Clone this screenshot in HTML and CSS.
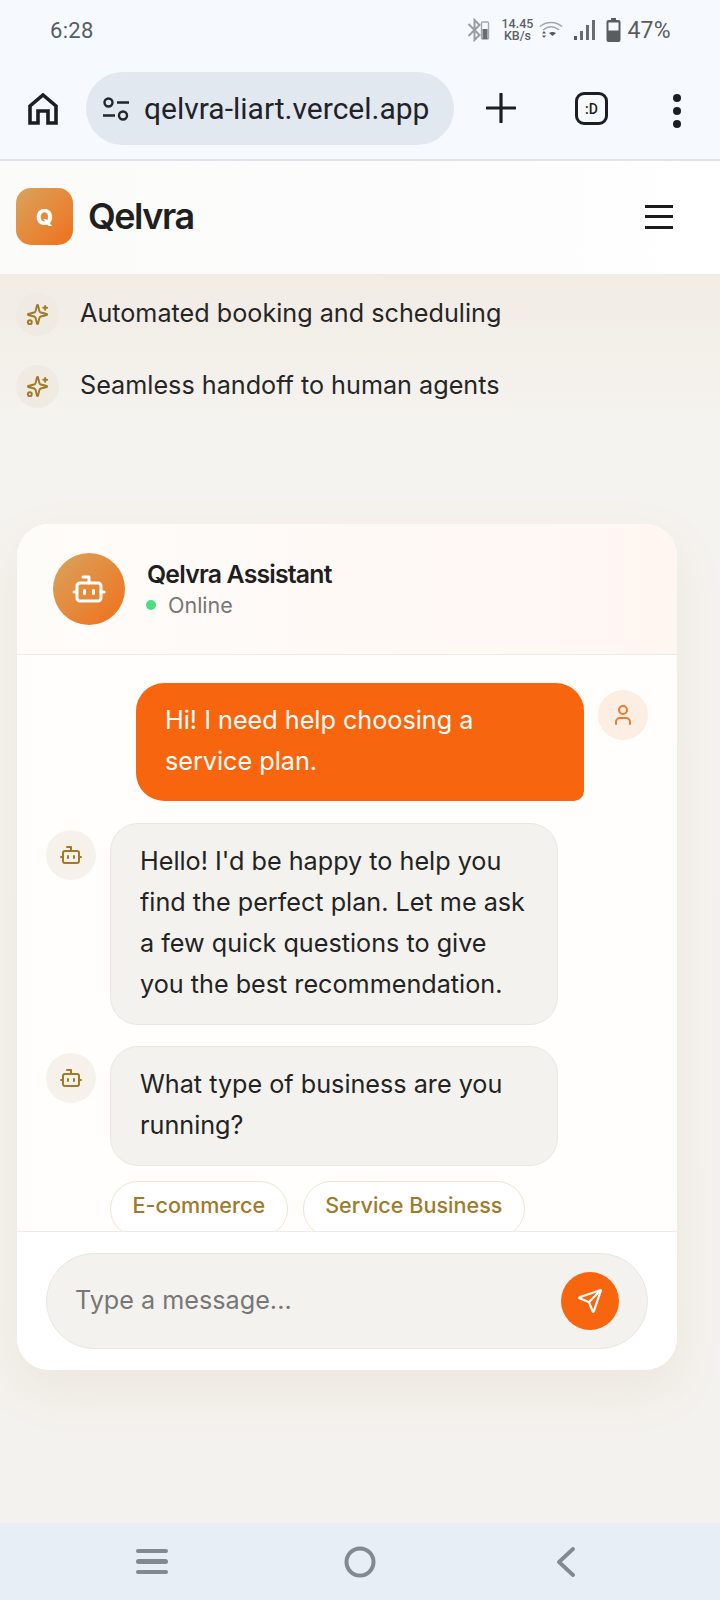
FILE: index.html
```html
<!DOCTYPE html>
<html lang="en">
<head>
<meta charset="utf-8">
<title>Qelvra</title>
<link rel="stylesheet" href="styles.css">
</head>
<body>
<svg class="defs" width="0" height="0" aria-hidden="true">
  <symbol id="i-sparkles" viewBox="0 0 24 24"><path d="M9.937 15.5A2 2 0 0 0 8.5 14.063l-6.135-1.582a.5.5 0 0 1 0-.962L8.5 9.936A2 2 0 0 0 9.937 8.5l1.582-6.135a.5.5 0 0 1 .963 0L14.063 8.5A2 2 0 0 0 15.5 9.937l6.135 1.581a.5.5 0 0 1 0 .964L15.5 14.063a2 2 0 0 0-1.437 1.437l-1.582 6.135a.5.5 0 0 1-.963 0z"/><path d="M20 3v4M22 5h-4"/><circle cx="4" cy="20" r="2"/></symbol>
  <symbol id="i-bot" viewBox="0 0 24 24"><path d="M12 8V4H8"/><rect width="16" height="12" x="4" y="8" rx="2"/><path d="M2 14h2M20 14h2M15 13v2M9 13v2"/></symbol>
  <symbol id="i-user" viewBox="0 0 24 24"><path d="M19 21v-2a4 4 0 0 0-4-4H9a4 4 0 0 0-4 4v2"/><circle cx="12" cy="7" r="4"/></symbol>
  <symbol id="i-send" viewBox="0 0 24 24"><path d="M14.536 21.686a.5.5 0 0 0 .937-.024l6.5-19a.496.496 0 0 0-.635-.635l-19 6.5a.5.5 0 0 0-.024.937l7.93 3.18a2 2 0 0 1 1.112 1.11z"/><path d="m21.854 2.147-10.94 10.939"/></symbol>
</svg>
<div class="phone">
  <div class="statusbar">
    <span class="clock">6:28</span>
    <div class="status-icons">
      <svg class="st-bt" viewBox="0 0 24 24"><path d="M3 6l11 11-5 5V2l5 5L3 18" fill="none" stroke="#9a9da1" stroke-width="2"/><rect x="16" y="4" width="7" height="17" rx="1" fill="none" stroke="#a4a7ab" stroke-width="1.4"/><rect x="17" y="11" width="5" height="10" fill="#6a6d70"/></svg>
      <div class="speed"><span>14.45</span><span>KB/s</span></div>
      <svg class="st-wifi" viewBox="0 0 24 20"><path d="M1 6.5C7 1 17 1 23 6.5M4 10c5-4 11-4 16 0" fill="none" stroke="#a4a7ab" stroke-width="1.5"/><path d="M10 13c2-1.500 5-1.500 7 0l-3.500 3z" fill="#55585b"/><path d="M3 13.500l2-2.500 2 2.500zM3 15.500l2 2.500 2-2.500z" fill="#55585b"/></svg>
      <svg class="st-signal" viewBox="0 0 22 22"><rect x="1" y="17" width="3" height="4" fill="#55585b"/><rect x="7" y="12" width="3" height="9" fill="#6a6d70"/><rect x="13" y="6" width="3" height="15" fill="#6a6d70"/><rect x="19" y="1" width="3" height="20" fill="#6a6d70"/></svg>
      <svg class="st-batt" viewBox="0 0 14 24"><path d="M4.500 0h5v2h2.500a2 2 0 0 1 2 2v18a2 2 0 0 1-2 2H2a2 2 0 0 1-2-2V4a2 2 0 0 1 2-2h2.500z" fill="#5a5d60"/><rect x="2" y="4.500" width="10" height="8" fill="#f6f9fe"/></svg>
      <span class="pct">47%</span>
    </div>
  </div>
  <div class="toolbar">
    <svg class="tb-home" viewBox="0 0 30 32"><path d="M2 30V13L15 2l13 11v17h-8V18h-10v12z" fill="none" stroke="#1c1f22" stroke-width="3.600" stroke-linejoin="miter"/></svg>
    <div class="pill">
      <svg class="tb-tune" viewBox="0 0 28 24"><circle cx="6.500" cy="5.500" r="4" fill="none" stroke="#22252a" stroke-width="2.400"/><path d="M15 5.500h12M1 18.500h12" stroke="#22252a" stroke-width="2.600" fill="none"/><circle cx="21" cy="18.500" r="4" fill="none" stroke="#22252a" stroke-width="2.400"/></svg>
      <span class="url">qelvra-liart.vercel.app</span>
    </div>
    <svg class="tb-plus" viewBox="0 0 30 30"><path d="M15 1v28M1 15h28" stroke="#1c1f22" stroke-width="3.200" fill="none" stroke-linecap="round"/></svg>
    <div class="tabs">:D</div>
    <div class="dots"><i></i><i></i><i></i></div>
  </div>
  <div class="viewport">
    <header class="site-header">
      <div class="brand">
        <div class="logo">Q</div>
        <span class="brand-name">Qelvra</span>
      </div>
      <div class="burger"><i></i><i></i><i></i></div>
    </header>
    <ul class="features">
      <li><span class="feat-icon"><svg class="ic ic-feat"><use href="#i-sparkles"/></svg></span><span class="feat-text">Automated booking and scheduling</span></li>
      <li><span class="feat-icon"><svg class="ic ic-feat"><use href="#i-sparkles"/></svg></span><span class="feat-text">Seamless handoff to human agents</span></li>
    </ul>
    <section class="card">
      <div class="card-head">
        <div class="head-avatar"><svg class="ic ic-head"><use href="#i-bot"/></svg></div>
        <div class="head-text">
          <div class="head-title">Qelvra Assistant</div>
          <div class="head-status"><i class="dot"></i>Online</div>
        </div>
      </div>
      <div class="messages">
        <div class="row row-user">
          <div class="bubble bubble-user">Hi! I need help choosing a service plan.</div>
          <div class="avatar avatar-user"><svg class="ic ic-av"><use href="#i-user"/></svg></div>
        </div>
        <div class="row">
          <div class="avatar"><svg class="ic ic-av"><use href="#i-bot"/></svg></div>
          <div class="bubble">Hello! I'd be happy to help you find the perfect plan. Let me ask a few quick questions to give you the best recommendation.</div>
        </div>
        <div class="row">
          <div class="avatar"><svg class="ic ic-av"><use href="#i-bot"/></svg></div>
          <div class="bubble">What type of business are you running?</div>
        </div>
        <div class="chips">
          <span class="chip">E-commerce</span>
          <span class="chip">Service Business</span>
        </div>
      </div>
      <div class="composer">
        <div class="input">
          <span class="placeholder">Type a message...</span>
          <span class="send"><svg class="ic ic-send"><use href="#i-send"/></svg></span>
        </div>
      </div>
    </section>
  </div>
  <nav class="navbar">
    <div class="nav-menu"><i></i><i></i><i></i></div>
    <svg class="nav-home" viewBox="0 0 32 32"><circle cx="16" cy="16" r="13.500" fill="none" stroke="#84898f" stroke-width="4"/></svg>
    <svg class="nav-back" viewBox="0 0 20 30"><path d="M17 2L3 15l14 13" fill="none" stroke="#84898f" stroke-width="3.800" stroke-linecap="round" stroke-linejoin="round"/></svg>
  </nav>
</div>
</body>
</html>
```
FILE: styles.css
```css
* { box-sizing: border-box; }
html, body { margin: 0; padding: 0; }
body { width: 720px; height: 1600px; overflow: hidden; font-family: "Inter", "Liberation Sans", sans-serif; color: #1f1f1f; }
.defs { position: absolute; }
.phone { width: 720px; height: 1600px; display: flex; flex-direction: column; background: #f5f3ef; }

.statusbar { height: 60px; flex: none; background: #f6f9fe; display: flex; align-items: center; justify-content: space-between; padding: 0 49px 0 50px; font-family: "Roboto", sans-serif; color: #5a5d60; }
.clock { font-size: 22px; letter-spacing: .3px; }
.status-icons { display: flex; align-items: center; }
.st-bt { width: 25px; height: 24px; margin-right: 11px; }
.speed { display: flex; flex-direction: column; align-items: center; font-size: 12.500px; line-height: 12px; font-weight: 500; margin-right: 6px; color: #5f6265; }
.st-wifi { width: 24px; height: 20px; margin-right: 10px; }
.st-signal { width: 22px; height: 22px; margin-right: 11px; }
.st-batt { width: 15px; height: 24px; margin-right: 6px; }
.pct { font-size: 23px; letter-spacing: .3px; }

.toolbar { height: 101px; flex: none; background: #f6f9fe; border-bottom: 2px solid #dfe4ea; display: flex; align-items: flex-start; padding: 12px 0 0 28px; }
.tb-home { width: 30px; height: 32px; margin-top: 21px; flex: none; }
.pill { width: 368px; height: 73px; margin-left: 28px; border-radius: 37px; background: #e2e8f0; display: flex; align-items: center; padding-left: 16px; flex: none; }
.tb-tune { width: 28px; height: 24px; flex: none; }
.url { font-family: "Roboto", sans-serif; font-size: 30px; color: #1f2328; margin-left: 14px; white-space: nowrap; }
.tb-plus { width: 30px; height: 30px; margin: 21px 0 0 32px; flex: none; }
.tabs { width: 33px; height: 33px; margin: 20px 0 0 59px; border: 3.500px solid #1c1f22; border-radius: 9px; font-family: "Roboto", sans-serif; font-size: 14px; font-weight: 500; display: flex; align-items: center; justify-content: center; color: #1c1f22; flex: none; }
.dots { display: flex; flex-direction: column; gap: 5px; margin: 22px 0 0 65px; flex: none; }
.dots i { display: block; width: 8px; height: 8px; border-radius: 50%; background: #1c1f22; }

.viewport { flex: 1; min-height: 0; overflow: hidden; background: linear-gradient(180deg, #f1ece4 0, #f1ece4 113px, #f5f3ef 260px, #f4f2ee 100%); }
.site-header { height: 113px; background: linear-gradient(90deg, #fbfbfa, #fcfcfc 60%, #ffffff); display: flex; align-items: center; justify-content: space-between; padding: 0 47px 2px 16px; }
.brand { display: flex; align-items: center; gap: 15px; }
.logo { width: 57px; height: 57px; border-radius: 15px; background: linear-gradient(135deg, #d9a45f, #f0701a); color: #fff; font-weight: 800; font-size: 22px; display: flex; align-items: center; justify-content: center; }
.brand-name { font-size: 36px; font-weight: 600; letter-spacing: -1.500px; color: #1f1f1f; margin-top: -2px; }
.burger { width: 28px; display: flex; flex-direction: column; gap: 7.500px; }
.burger i { display: block; height: 3px; background: #1c1c1c; }

.features { list-style: none; margin: 0; padding: 19px 16px 0; display: flex; flex-direction: column; gap: 29px; }
.features li { display: flex; align-items: center; gap: 22px; font-size: 25.200px; height: 43px; color: #262626; }
.feat-text { margin: -4px 0 0 -1px; }
.feat-icon { width: 43px; height: 43px; border-radius: 50%; background: #f0ebe2; display: flex; align-items: center; justify-content: center; flex: none; }
.ic { fill: none; stroke: currentColor; stroke-width: 2; stroke-linecap: round; stroke-linejoin: round; display: block; }
.ic-feat { width: 23px; height: 23px; color: #a07a28; }

.card { margin: 116px 0 0 17px; width: 660px; height: 846px; border-radius: 32px; background: #fff; box-shadow: 0 20px 50px rgba(170, 130, 80, .10); overflow: hidden; display: flex; flex-direction: column; }
.card-head { height: 131px; flex: none; background: linear-gradient(90deg, #fefcf9, #fff6f2); border-bottom: 1px solid #eeebe6; display: flex; align-items: center; gap: 22px; padding: 0 36px; }
.head-avatar { width: 72px; height: 72px; border-radius: 50%; background: linear-gradient(135deg, #d9a45f, #f0701a); display: flex; align-items: center; justify-content: center; color: #fff; }
.ic-head { width: 36px; height: 36px; }
.head-title { font-size: 24.800px; font-weight: 600; letter-spacing: -.8px; color: #1f1f1f; line-height: 32px; margin-top: -1px; }
.head-status { display: flex; align-items: center; gap: 12px; font-size: 21.500px; color: #767676; line-height: 30px; margin: 0 0 0 -1px; }
.dot { width: 10px; height: 10px; border-radius: 50%; background: #4ade80; }

.messages { flex: 1; min-height: 0; overflow: hidden; background: #fffefc; padding: 28px 29px 0; display: flex; flex-direction: column; }
.row { display: flex; gap: 14px; align-items: flex-start; margin-bottom: 21px; }
.row-user { justify-content: flex-end; margin-bottom: 22px; }
.avatar { width: 50px; height: 50px; border-radius: 50%; flex: none; margin-top: 7px; background: #f6f1ea; color: #a07a28; display: flex; align-items: center; justify-content: center; }
.avatar-user { background: #fdeee4; color: #ea7a2c; }
.ic-av { width: 24px; height: 24px; }
.bubble { width: 448px; padding: 17px 28px 19px 29px; border-radius: 28px; background: #f4f2ee; border: 1px solid #ebe8e2; font-size: 25.200px; line-height: 41px; color: #232323; }
.bubble-user { background: #f7660f; border: 0; color: #fff; border-bottom-right-radius: 10px; padding: 17px 29px 19px; }
.chips { display: flex; gap: 15px; margin: -6px 0 0 64px; flex: none; }
.chip { height: 56px; padding: 0 21.500px 8px; border: 1px solid #ece6d2; border-radius: 28px; background: #fff; color: #a07a28; font-size: 21.600px; font-weight: 500; display: flex; align-items: center; flex: none; }

.composer { flex: none; height: 139px; background: #fff; border-top: 1px solid #efece7; padding: 21px 29px 0; }
.input { height: 96px; border-radius: 48px; background: #f4f2ee; border: 1px solid #e9e6e0; display: flex; align-items: center; justify-content: space-between; padding: 0 28px 0 28px; }
.placeholder { font-size: 25.200px; color: #777; margin-top: -2px; }
.send { width: 58px; height: 58px; border-radius: 50%; background: #f7660f; color: #fff; display: flex; align-items: center; justify-content: center; }
.ic-send { width: 26px; height: 26px; }

.navbar { height: 77px; flex: none; background: #e8eef6; display: flex; align-items: center; padding: 0 0 0 136px; }
.nav-menu { width: 32px; display: flex; flex-direction: column; gap: 6px; }
.nav-menu i { display: block; height: 4.500px; border-radius: 2.500px; background: #84898f; }
.nav-home { width: 32px; height: 32px; margin-left: 176px; }
.nav-back { width: 20px; height: 30px; margin-left: 180px; }
```
